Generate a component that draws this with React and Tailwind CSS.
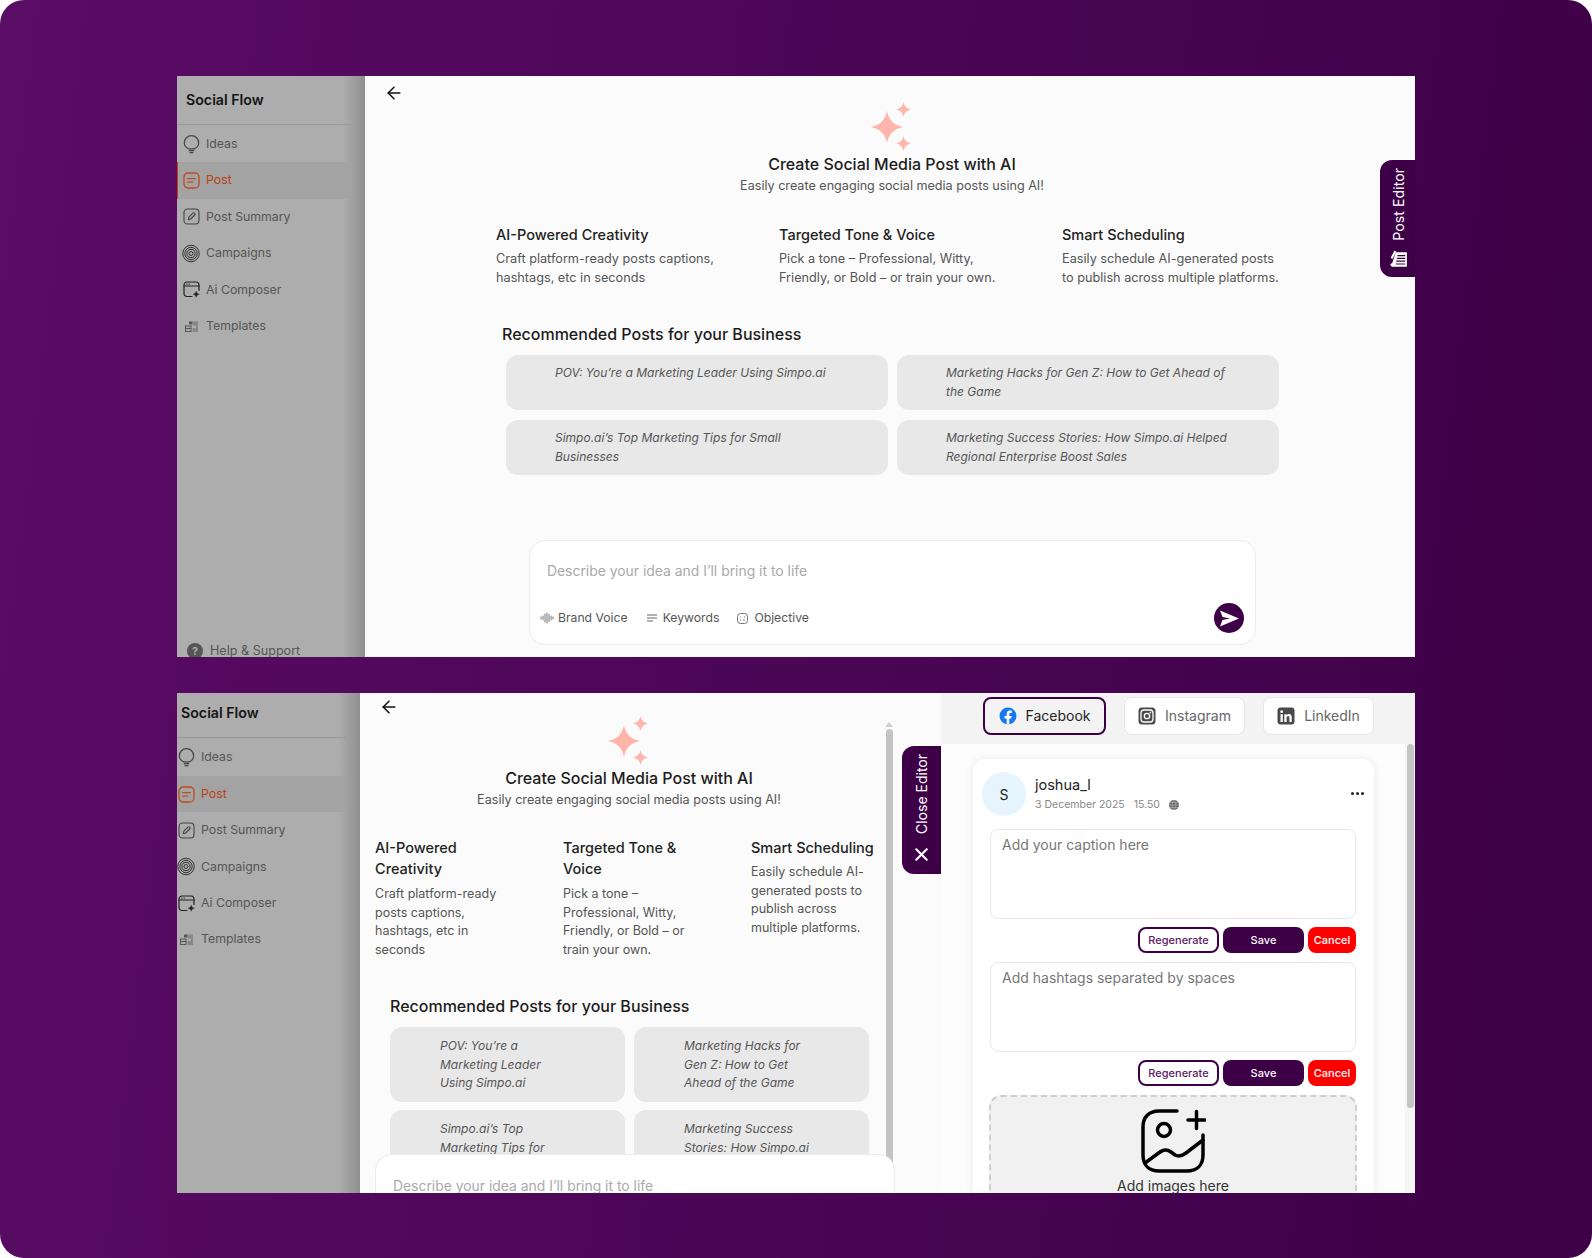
import clsx from 'clsx';
import { ArrowLeft, X } from 'lucide-react';

const features = [
  { title: 'AI-Powered Creativity', text: 'Craft platform-ready posts captions, hashtags, etc in seconds' },
  { title: 'Targeted Tone & Voice', text: 'Pick a tone – Professional, Witty, Friendly, or Bold – or train your own.' },
  { title: 'Smart Scheduling', text: 'Easily schedule AI-generated posts to publish across multiple platforms.' },
];

const posts = [
  'POV: You’re a Marketing Leader Using Simpo.ai',
  'Marketing Hacks for Gen Z: How to Get Ahead of the Game',
  'Simpo.ai’s Top Marketing Tips for Small Businesses',
  'Marketing Success Stories: How Simpo.ai Helped Regional Enterprise Boost Sales',
];

// sidebar icons
const IdeasIcon = () => (
  <svg width="17" height="19" viewBox="0 0 17 19" fill="none" stroke="#444" strokeWidth="1.2">
    <path d="M5.5 13.800C2.800 12.500 1.300 10.400 1.300 7.800a7.200 7.200 0 0 1 14.400 0c0 2.600-1.500 4.700-4.200 6z" />
    <path d="M5.800 15.600h5.400M6.600 17.600h3.800" />
  </svg>
);
const PostIcon = () => (
  <svg width="17" height="17" viewBox="0 0 17 17" fill="none" stroke="#bf4c1f" strokeWidth="1.3" strokeLinecap="round">
    <rect x="1" y="1" width="15" height="15" rx="4" />
    <path d="M4.600 6.600h7.800M4.600 10.200h5" />
  </svg>
);
const SummaryIcon = () => (
  <svg width="17" height="17" viewBox="0 0 17 17" fill="none" stroke="#444" strokeWidth="1.1" strokeLinejoin="round">
    <rect x="1" y="1" width="15" height="15" rx="3.500" />
    <path d="M5.400 11.600l.5-2.400 4-4a1.200 1.200 0 0 1 1.800 1.800l-4 4z" />
  </svg>
);
const CampaignsIcon = () => (
  <svg width="19" height="19" viewBox="0 0 19 19" fill="none" stroke="#2a2a2a" strokeWidth="1">
    <circle cx="9.500" cy="9.500" r="8.700" />
    <circle cx="9.500" cy="9.500" r="6.500" />
    <circle cx="9.500" cy="9.500" r="4.300" />
    <circle cx="9.500" cy="9.500" r="2.100" />
  </svg>
);
const ComposerIcon = () => (
  <svg width="17" height="17" viewBox="0 0 17 17" fill="none" stroke="#222" strokeWidth="1.200" strokeLinecap="round">
    <path d="M9 15.500H4a3 3 0 0 1-3-3V4a3 3 0 0 1 3-3h9a3 3 0 0 1 3 3v5.500" />
    <path d="M1 5h15" />
    <path d="M3.600 3h.4M6 3h.4" />
    <circle cx="13.200" cy="13.200" r="1.700" fill="#222" stroke="none" />
    <path d="M13.200 10.600v5.200M10.600 13.200h5.200" strokeWidth="1" />
  </svg>
);
const TemplatesIcon = () => (
  <svg width="13" height="11" viewBox="0 0 13 11" fill="#555">
    <path d="M0 4.500h6.500V11H0zM1 5.500v1.600h4.500V5.500zM1 8v2h4.500V8z" fillRule="evenodd" />
    <path d="M4 .5h3.500v3H4z" />
    <path d="M8 .5h5V11H7.500V7H11V4.500H8z" fill="#888" />
  </svg>
);

const navItems = [
  { label: 'Ideas', Icon: IdeasIcon },
  { label: 'Post', Icon: PostIcon, active: true },
  { label: 'Post Summary', Icon: SummaryIcon },
  { label: 'Campaigns', Icon: CampaignsIcon },
  { label: 'Ai Composer', Icon: ComposerIcon },
  { label: 'Templates', Icon: TemplatesIcon },
];

const Sidebar = ({ compact, help }) => (
  <aside
    className={clsx(
      'relative flex shrink-0 flex-col bg-[linear-gradient(to_right,#adadad_88%,#909090)]',
      compact ? 'w-[183px]' : 'w-[188px]'
    )}
  >
    <div className="mr-[14px] border-b border-[#999]">
      <div className={clsx('flex items-center text-[14.2px] font-semibold text-[#141414]', compact ? 'h-[44px] pb-[4px] pl-[4px]' : 'h-[48px] pl-[9px]')}>
        Social Flow
      </div>
    </div>
    <nav className={clsx('mr-[14px] flex flex-col', compact ? 'mt-[1.500px]' : 'mt-[1px]')}>
      {navItems.map(({ label, Icon, active }) => (
        <div
          key={label}
          className={clsx(
            'flex h-[36.400px] items-center gap-[6px] text-[12.300px]',
            compact ? 'pl-0' : 'pl-[5px]',
            active ? 'bg-[#a3a3a3] text-[#bf4012]' : 'text-[#555]',
            active && !compact && 'shadow-[inset_1px_0_0_#bf4012]'
          )}
        >
          <span className="flex w-[18px] justify-center">
            <Icon />
          </span>
          {label}
        </div>
      ))}
    </nav>
    {help && (
      <div className="absolute left-[10px] top-[566px] flex items-center gap-[7px] text-[12.600px] text-[#555]">
        <span className="flex h-4 w-4 items-center justify-center rounded-full bg-[#555] text-[11px] font-bold text-[#adadad]">?</span>
        Help &amp; Support
      </div>
    )}
  </aside>
);

const Sparkles = () => (
  <svg width="48" height="52" viewBox="0 0 48 52" fill="#ffb5ab">
    <path d="M19 11C21 20 25.500 25 35 27 25.500 29 21 34 19 43 17 34 12.500 29 3 27 12.500 25 17 20 19 11z" />
    <path d="M35.500 2C36.500 6.300 38.400 8.400 43 9.500 38.400 10.600 36.500 12.700 35.500 17 34.500 12.700 32.600 10.600 28 9.500 32.600 8.400 34.500 6.300 35.500 2z" />
    <path d="M35.500 36C36.500 40.300 38.400 42.400 43 43.500 38.400 44.600 36.500 46.700 35.500 51 34.500 46.700 32.600 44.600 28 43.500 32.600 42.400 34.500 40.300 35.500 36z" />
  </svg>
);

const Hero = () => (
  <div className="flex flex-col items-center">
    <Sparkles />
    <h1 className="mt-[2px] text-[16px] font-medium leading-[20px] text-[#1c1c1c]">Create Social Media Post with AI</h1>
    <p className="text-[12.600px] leading-[24px] text-[#555]">Easily create engaging social media posts using AI!</p>
  </div>
);

const Composer = ({ compact }) => (
  <div className="flex h-[105px] flex-col rounded-2xl border border-[#ececec] bg-white">
    <p className={clsx('pl-[17px] text-[13.900px] leading-[20px] text-[#aaa]', compact ? 'pt-[21px]' : 'pt-[20px]')}>
      Describe your idea and I’ll bring it to life
    </p>
    <div className="mt-[22px] flex items-center pl-[10px] pr-[11px] text-[12.200px] text-[#555]">
      <svg width="14" height="12" viewBox="0 0 14 12" stroke="#777" strokeWidth="1" strokeLinecap="round">
        <path d="M1 5v2M3 4v4M5 2v8M7 1v10M9 2.500v7M11 4v4M13 5v2" />
      </svg>
      <span className="ml-[4px]">Brand Voice</span>
      <svg className="ml-[19px]" width="10" height="8" viewBox="0 0 10 8" stroke="#666" strokeWidth="1">
        <path d="M0 1h10M0 4h10M0 7h6" />
      </svg>
      <span className="ml-[6px]">Keywords</span>
      <svg className="ml-[18px]" width="11" height="11" viewBox="0 0 11 11" fill="none" stroke="#666" strokeWidth="0.900">
        <rect x="0.500" y="0.500" width="10" height="10" rx="3" />
        <path d="M3 4h1M7 4h1M3 7h1M6 7h2" />
      </svg>
      <span className="ml-[6px]">Objective</span>
      <span className="ml-auto flex h-[30px] w-[30px] items-center justify-center rounded-full bg-[#3d0046]">
        <svg width="20" height="17" viewBox="0 0 20 17" fill="#fff">
          <path d="M1 0.500L20 8.500 1 16.500l2.500-6.600L11 8.500 3.500 7.100z" />
        </svg>
      </span>
    </div>
  </div>
);

const EditorTabIcon = () => (
  <svg width="19" height="19" viewBox="0 0 17 17" fill="#fff">
    <path d="M6 2h10v13H2.500L1 13l2-1.500z" />
    <path d="M7.500 5h7M7 7.500h7.500M6.500 10h8M6 12.500h8.500" stroke="#3d0046" strokeWidth="1" />
    <path d="M1.500 7L5 .5l1.500 1L3 8z" />
  </svg>
);

const FacebookIcon = () => (
  <svg width="18" height="18" viewBox="0 0 18 18">
    <circle cx="9" cy="9" r="8.500" fill="#1877f2" />
    <path d="M12.300 11.400l.4-2.500h-2.400V7.300c0-.7.3-1.300 1.400-1.300h1.100V3.800s-1-.2-1.900-.2c-2 0-3.200 1.200-3.200 3.300v2H5.500v2.500h2.200v6.100a9 9 0 0 0 2.600 0v-6.100z" fill="#fff" />
  </svg>
);
const InstagramIcon = () => (
  <svg width="18" height="18" viewBox="0 0 18 18" fill="none">
    <rect x="0.500" y="0.500" width="17" height="17" rx="3.500" fill="#4a4a4a" />
    <rect x="3" y="3" width="12" height="12" rx="3" stroke="#fff" strokeWidth="1.300" />
    <circle cx="9" cy="9" r="2.700" stroke="#fff" strokeWidth="1.300" />
    <circle cx="12.400" cy="5.600" r="0.800" fill="#fff" />
  </svg>
);
const LinkedinIcon = () => (
  <svg width="18" height="18" viewBox="0 0 18 18">
    <rect x="0.500" y="0.500" width="17" height="17" rx="3" fill="#4a4a4a" />
    <path d="M3.500 7.200h2.300V15H3.500zM4.650 3.300a1.350 1.350 0 1 1 0 2.700 1.350 1.350 0 0 1 0-2.700zM7.300 7.200h2.200v1.100c.4-.7 1.200-1.300 2.400-1.300 2.300 0 2.800 1.500 2.800 3.500V15h-2.300v-4c0-1-.2-1.900-1.300-1.900s-1.500.9-1.500 1.900v4H7.300z" fill="#fff" />
  </svg>
);

const ActionRow = () => (
  <div className="mt-[8px] flex justify-end gap-[4px] pr-[18px] text-[11px] font-medium">
    <button className="h-[26px] w-[81px] rounded-lg border-2 border-[#3d0046] bg-white text-[#5a1a66]">Regenerate</button>
    <button className="h-[26px] w-[81px] rounded-lg bg-[#3d0046] text-white">Save</button>
    <button className="h-[26px] w-[48px] rounded-lg bg-[#ff0000] text-white">Cancel</button>
  </div>
);

const FieldBox = ({ placeholder }) => (
  <div className="ml-[17px] mr-[18px] h-[90px] rounded-lg border border-[#e8e8e8] bg-white px-[11px] pt-[5px] text-[14px] leading-[20px] text-[#777]">
    {placeholder}
  </div>
);

const EditorPanel = () => (
  <section className="flex w-[474px] shrink-0 flex-col">
    <div className="flex h-[51px] shrink-0 items-start gap-[18px] bg-[#f3f3f3] pl-[42px] pt-[4px] text-[14px] leading-[20px]">
      <div className="flex h-[38px] w-[123px] items-center justify-center gap-[9px] rounded-lg border-2 border-[#3d0046] pb-[1px] text-[#222]">
        <FacebookIcon />
        Facebook
      </div>
      <div className="flex h-[38px] w-[121px] items-center justify-center gap-[9px] rounded-lg border border-[#e6e6e6] bg-white pb-[1px] text-[#666]">
        <InstagramIcon />
        Instagram
      </div>
      <div className="flex h-[38px] w-[111px] items-center justify-center gap-[9px] rounded-lg border border-[#e6e6e6] bg-white pb-[1px] text-[#666]">
        <LinkedinIcon />
        LinkedIn
      </div>
    </div>
    <div className="relative flex-1 overflow-hidden bg-[#fdfdfd] pl-[32px] pt-[15px]">
      <div className="absolute right-0 top-0 h-full w-[10px] bg-[#f5f5f5]" />
      <div className="absolute right-[1px] top-0 h-[364px] w-[7px] rounded-full bg-[#c4c4c4]" />
      <div className="h-[500px] w-[401px] rounded-xl bg-white shadow-[0_0_10px_rgba(0,0,0,0.08)]">
        <div className="relative flex pl-[9px] pt-[13px]">
          <div className="flex h-[44px] w-[44px] items-center justify-center rounded-full bg-[#e6f4fd] text-[14px] text-[#222]">S</div>
          <div className="ml-[9px]">
            <div className="text-[14.500px] leading-[26px] text-[#222]">joshua_l</div>
            <div className="mt-[1px] flex items-center text-[10.500px] leading-[12px] text-[#888]">
              3 December 2025
              <span className="ml-[9px]">15.50</span>
              <svg className="ml-[9px]" width="10" height="10" viewBox="0 0 10 10" fill="none" stroke="#bbb" strokeWidth="0.600">
                <circle cx="5" cy="5" r="5" fill="#666" stroke="none" />
                <path d="M0 5h10M1 2.500h8M1 7.500h8M5 0c-2.500 3-2.500 7 0 10M5 0c2.500 3 2.500 7 0 10" />
              </svg>
            </div>
          </div>
          <div className="absolute right-[10px] top-[33px] flex gap-[2px]">
            <span className="h-[3px] w-[3px] rounded-full bg-[#222]" />
            <span className="h-[3px] w-[3px] rounded-full bg-[#222]" />
            <span className="h-[3px] w-[3px] rounded-full bg-[#222]" />
          </div>
        </div>
        <div className="mt-[13px]">
          <FieldBox placeholder="Add your caption here" />
          <ActionRow />
        </div>
        <div className="mt-[9px]">
          <FieldBox placeholder="Add hashtags separated by spaces" />
          <ActionRow />
        </div>
        <div className="ml-[16px] mr-[17px] mt-[9px] flex h-[120px] flex-col items-center rounded-xl border-2 border-dashed border-[#cfcfcf] bg-[#f1f1f1] pt-[11px] text-[14px] text-[#333]">
          <svg width="66" height="66" viewBox="0 0 66 66" fill="none" stroke="#000" strokeWidth="3.500" strokeLinecap="round" strokeLinejoin="round">
            <path d="M37 3H19C9 3 3 9 3 19v28c0 10 6 16 16 16h28c10 0 16-6 16-16V27" />
            <circle cx="24" cy="22" r="6.500" />
            <path d="M48 12h17M56.500 3.500v17" />
            <path d="M5 55l15-11c4-3 7-3 11 0l4 3c4 2 7 1 11-2l17-13" />
          </svg>
          <span className="mt-[1px]">Add images here</span>
        </div>
      </div>
    </div>
  </section>
);

export default function App() {
  return (
    <div className="h-[1258px] w-[1592px] overflow-hidden bg-white [font-family:Inter,sans-serif]">
      <div className="flex h-full flex-col gap-[36px] rounded-[24px] bg-[linear-gradient(97deg,#5a0c66_0%,#3d0046_100%)] pl-[177px] pt-[76px]">
        {/* first state: no editor open */}
        <div className="flex h-[581px] w-[1238px] overflow-hidden bg-[#fbfbfb]">
          <Sidebar help />
          <main className="relative flex-1">
            <div className="h-6 pl-[19px] pt-[7px]">
              <ArrowLeft size={20} strokeWidth={1.800} className="text-[#111]" />
            </div>
            <div className="pl-[4px]">
              <Hero />
            </div>
            <div className="ml-[131px] mt-[27px] grid grid-cols-[283px_283px_1fr]">
              {features.map((f) => (
                <div key={f.title}>
                  <h3 className="text-[14.500px] font-medium leading-[20px] text-[#222]">{f.title}</h3>
                  <p className="mt-[4px] w-[222px] text-[12.700px] leading-[19px] text-[#555]">{f.text}</p>
                </div>
              ))}
            </div>
            <h2 className="ml-[137px] mt-[35px] text-[16px] font-medium leading-[24px] text-[#1c1c1c]">Recommended Posts for your Business</h2>
            <div className="ml-[141px] mt-[9px] grid w-[773px] grid-cols-2 gap-x-[9px] gap-y-[10px]">
              {posts.map((p) => (
                <div key={p} className="h-[55px] rounded-xl bg-[#e8e8e8] pl-[49px] pr-[48px] pt-[9px] text-[12px] italic leading-[18.500px] text-[#555]">
                  {p}
                </div>
              ))}
            </div>
            <div className="ml-[164px] mt-[65px] w-[727px]">
              <Composer />
            </div>
            <div className="absolute right-0 top-[84px] flex h-[117px] w-[35px] flex-col items-center justify-between rounded-l-xl bg-[#3d0046] pb-[8px] pl-[2px] pt-[8px] text-[14.200px] text-white">
              <span className="rotate-180 [writing-mode:vertical-rl]">Post Editor</span>
              <EditorTabIcon />
            </div>
          </main>
        </div>

        {/* second state: editor open */}
        <div className="flex h-[500px] w-[1238px] overflow-hidden bg-[#fbfbfb]">
          <Sidebar compact />
          <main className="relative w-[581px] shrink-0 overflow-hidden">
            <div className="h-[21px] pl-[19px] pt-[4px]">
              <ArrowLeft size={20} strokeWidth={1.800} className="text-[#111]" />
            </div>
            <div className="w-[538px]">
              <Hero />
            </div>
            <div className="ml-[15px] mt-[25px] grid w-[520px] grid-cols-[188px_188px_1fr]">
              {features.map((f, i) => (
                <div key={f.title} className="w-[135px]">
                  <h3 className="text-[14.500px] font-medium leading-[21px] text-[#222]">{f.title}</h3>
                  <p className={clsx('text-[12.500px] leading-[18.700px] text-[#555]', i === 2 ? 'mt-[5px]' : 'mt-[6px]')}>{f.text}</p>
                </div>
              ))}
            </div>
            <h2 className="ml-[30px] mt-[34px] text-[16px] font-medium leading-[24px] text-[#1c1c1c]">Recommended Posts for your Business</h2>
            <div className="ml-[30px] mt-[9px] grid w-[479px] grid-cols-2 gap-x-[9px] gap-y-[8px]">
              {posts.map((p) => (
                <div key={p} className="h-[75px] rounded-xl bg-[#e8e8e8] pl-[50px] pr-[52px] pt-[10px] text-[12px] italic leading-[18.700px] text-[#555]">
                  {p}
                </div>
              ))}
            </div>
            {/* scrollbar + composer + close tab sit over the scrolling content */}
            <div className="absolute left-[525px] top-[29px] h-0 w-0 border-x-[4px] border-b-[5px] border-x-transparent border-b-[#d0d0d0]" />
            <div className="absolute left-[526px] top-[36px] h-[440px] w-[7px] rounded-full bg-[#c4c4c4]" />
            <div className="absolute left-[15px] top-[461px] w-[520px]">
              <Composer compact />
            </div>
            <div className="absolute right-0 top-[53px] flex h-[128px] w-[39px] flex-col items-center justify-between rounded-l-xl bg-[#3d0046] pb-[9px] pt-[8px] text-[14px] text-white">
              <span className="rotate-180 [writing-mode:vertical-rl]">Close Editor</span>
              <X size={21} strokeWidth={2.400} />
            </div>
          </main>
          <EditorPanel />
        </div>
      </div>
    </div>
  );
}
